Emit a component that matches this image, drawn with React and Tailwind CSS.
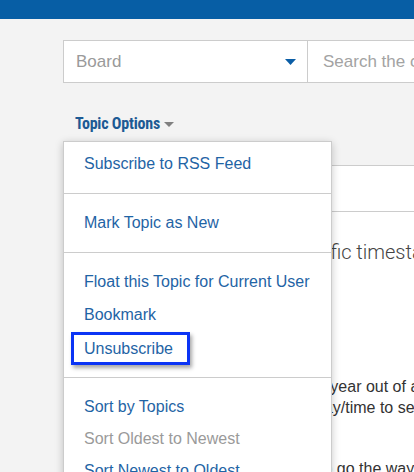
import React from "react";

const MenuItem = ({ children, muted }) => (
  <div className="h-[33px] flex items-center pl-[20px]">
    <span className={muted ? "text-[#9a9a9a]" : "text-[#1f64a5]"}>{children}</span>
  </div>
);

const FocusedItem = ({ children }) => (
  <div className="h-[33px] flex items-center pl-[7px]">
    <span className="h-[33px] w-[119px] flex items-center pl-[10px] mt-[2px] border-[3px] border-[#0b34f5] text-[#1f64a5] shadow-[2px_3px_4px_rgba(0,0,0,0.35)]">
      {children}
    </span>
  </div>
);

const App = () => {
  return (
    <div
      className="w-[414px] h-[472px] overflow-hidden bg-[#f3f3f3] relative"
      style={{ fontFamily: '"Liberation Sans", Arial, sans-serif' }}
    >
      {/* Top bar */}
      <div className="h-[19px] bg-[#075ea5]" />

      <div className="pl-[63px] pt-[21px]">
        {/* Search row */}
        <div className="flex h-[43px] border border-[#cccccc] border-r-0 bg-white">
          <div className="w-[244px] shrink-0 flex items-center justify-between pl-[12px] pr-[11px] border-r border-[#cccccc]">
            <span className="text-[17px] text-[#9a9a9a]">Board</span>
            <svg width="11" height="6" viewBox="0 0 11 6">
              <path d="M0 0 L11 0 L5.5 6 Z" fill="#0b5ea6" />
            </svg>
          </div>
          <div className="flex items-center pl-[15px] whitespace-nowrap overflow-hidden">
            <span className="text-[17px] text-[#a3a3a3]">Search the community</span>
          </div>
        </div>

        {/* Topic options */}
        <div className="relative">
          <div className="flex items-center gap-[4px] pl-[12px] pt-[23px] h-[58px]">
            <span
              className="text-[16px] font-bold text-[#1d5a94] tracking-[-0.2px]"
              style={{ fontFamily: '"Liberation Sans Narrow", "Roboto Condensed", Roboto, sans-serif' }}
            >
              Topic Options
            </span>
            <svg width="10" height="5" viewBox="0 0 10 5" className="mt-[1px]">
              <path d="M0 0 L10 0 L5 5 Z" fill="#808080" />
            </svg>
          </div>

          {/* Dropdown menu */}
          <div className="absolute left-0 top-[58px] w-[269px] bg-white border border-[#cccccc] z-10 shadow-[0_2px_8px_rgba(0,0,0,0.22)] text-[16px]">
            <div className="pt-[5px] pb-[13px] border-b border-[#cccccc]">
              <MenuItem>Subscribe to RSS Feed</MenuItem>
            </div>
            <div className="pt-[12px] pb-[13px] border-b border-[#cccccc]">
              <MenuItem>Mark Topic as New</MenuItem>
            </div>
            <div className="pt-[12px] pb-[13px] border-b border-[#cccccc]">
              <MenuItem>Float this Topic for Current User</MenuItem>
              <MenuItem>Bookmark</MenuItem>
              <FocusedItem>Unsubscribe</FocusedItem>
            </div>
            <div className="pt-[13px] pb-[12px]">
              <div className="h-[32px] flex items-center pl-[20px] text-[#1f64a5]">Sort by Topics</div>
              <div className="h-[32px] flex items-center pl-[20px] text-[#9a9a9a]">Sort Oldest to Newest</div>
              <div className="h-[32px] flex items-center pl-[20px] text-[#1f64a5]">Sort Newest to Oldest</div>
            </div>
          </div>

          {/* Content panel behind */}
          <div className="mt-[24px] bg-white border-t border-[#cccccc] h-[320px]">
            <div className="h-[46px] border-b border-[#cccccc]" />
            <div className="pl-[225px] pt-[26px] whitespace-nowrap">
              <div
                className="-ml-[4px] text-[20px] font-light text-[#444444] leading-[28px]"
                style={{ fontFamily: 'Roboto, "Noto Sans", sans-serif' }}
              >
                specific timestamp
              </div>
              <div className="mt-[110px] pl-[29px] text-[16px] text-[#333333] leading-[21px]">
                <p>a year out of a thread</p>
                <p className="-ml-[2px]">day/time to set it</p>
                <p className="mt-[40px] pl-[2px]">to go the way</p>
              </div>
            </div>
          </div>
        </div>
      </div>
    </div>
  );
};

export default App;
